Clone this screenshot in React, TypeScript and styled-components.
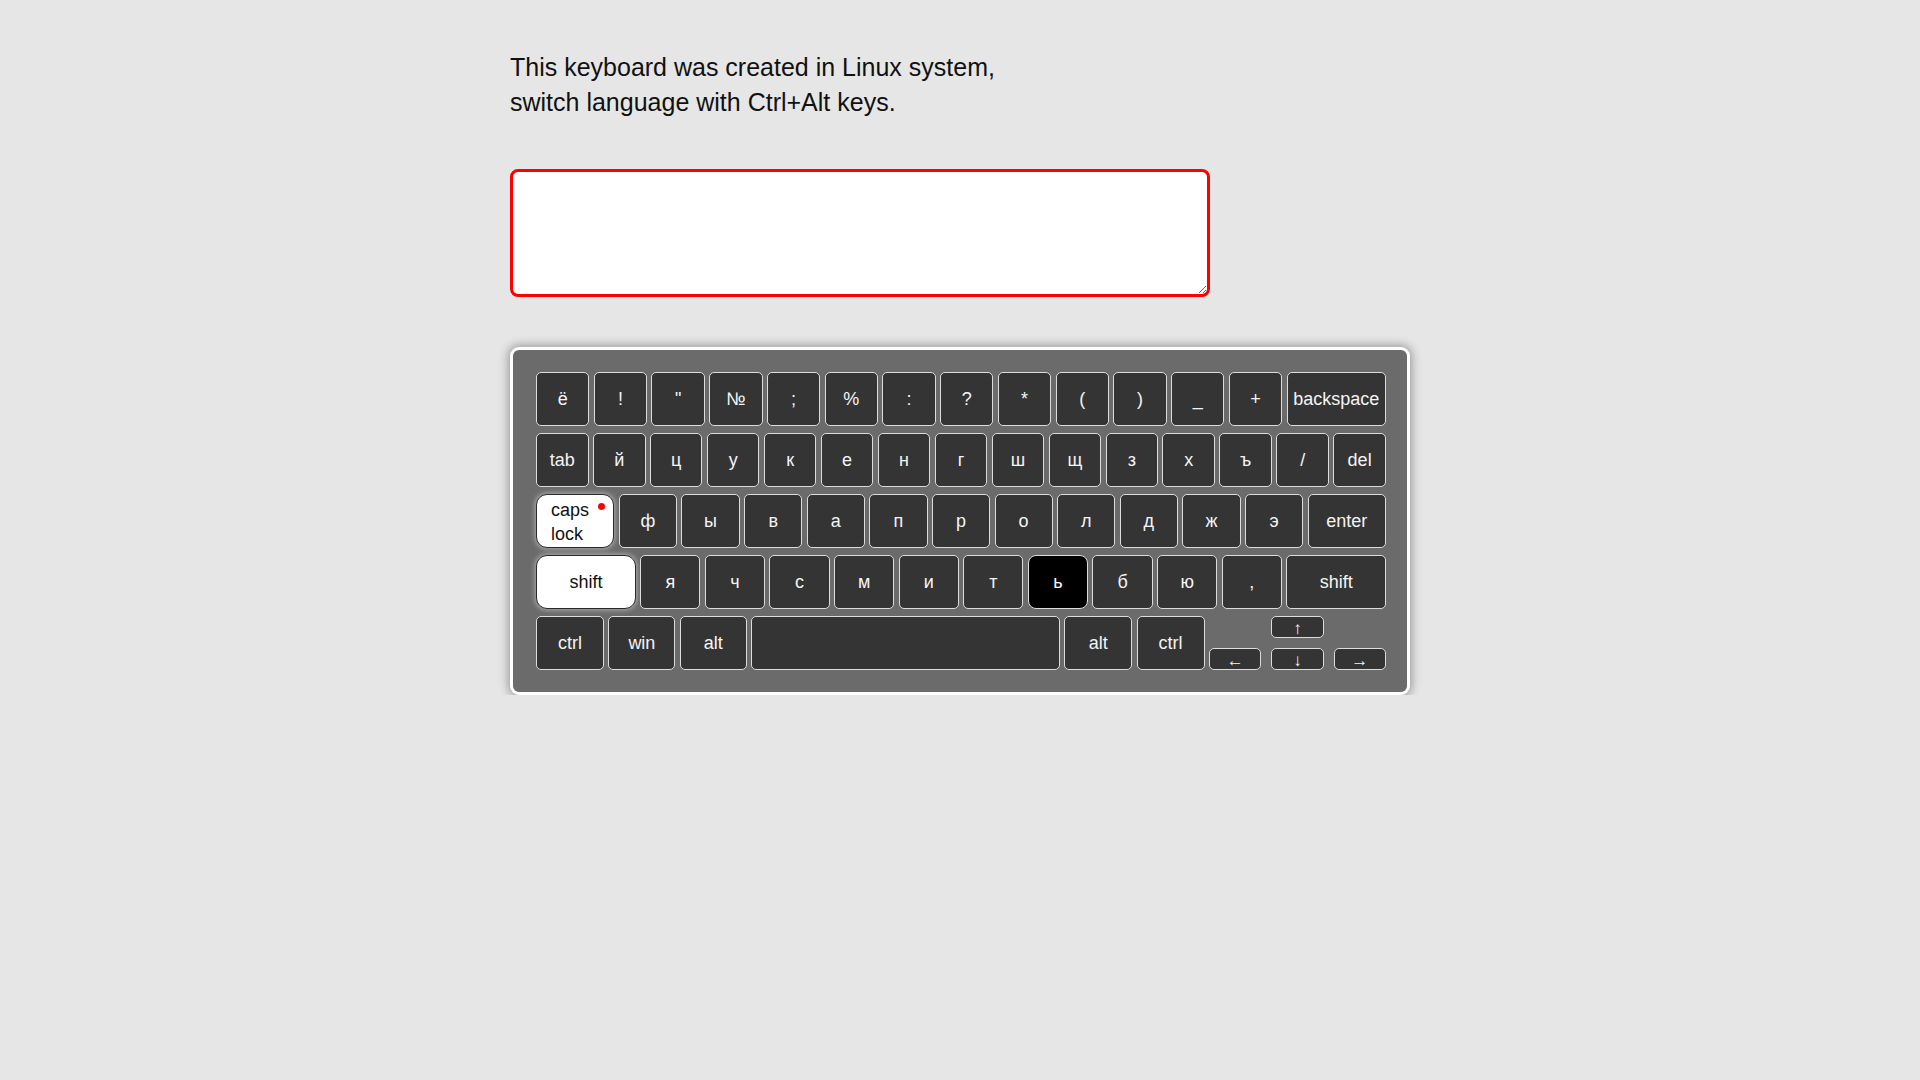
import React from "react";
import styled, { createGlobalStyle, css } from "styled-components";

const GlobalStyle = createGlobalStyle`
  html, body {
    margin: 0;
    padding: 0;
    background: #e6e6e6;
    font-family: "Liberation Sans", Arial, sans-serif;
  }
`;

const Page = styled.main`
  width: 900px;
  margin: 0 auto;
  padding-top: 50px;
`;

const Intro = styled.p`
  margin: 0;
  font-size: 25px;
  line-height: 35px;
  color: #111;
`;

const TextBox = styled.textarea`
  display: block;
  box-sizing: border-box;
  width: 700px;
  height: 128px;
  margin-top: 49px;
  border: 3px solid #ff0000;
  border-radius: 8px;
  background: #fff;
  outline: none;
  font-family: "Liberation Sans", Arial, sans-serif;
  font-size: 18px;
`;

const Keyboard = styled.section`
  box-sizing: border-box;
  width: 900px;
  margin-top: 50px;
  padding: 22px 21px 22px 23px;
  border: 3px solid #ffffff;
  border-radius: 9px;
  background: #6b6b6b;
  box-shadow: 0 0 10px 2px rgba(0, 0, 0, 0.32);
  display: flex;
  flex-direction: column;
  gap: 7px;
`;

const Row = styled.div`
  display: flex;
  gap: 4.4px;
  height: 54px;
`;

type Variant = "dark" | "light" | "pressed";

const Key = styled.div<{ $grow?: number; $width?: number; $variant?: Variant; $align?: "left" | "center" }>`
  position: relative;
  box-sizing: border-box;
  ${(p) =>
    p.$width
      ? css`flex: 0 0 ${p.$width}px;`
      : css`flex: ${p.$grow ?? 1} 1 0;`}
  min-width: 0;
  height: 100%;
  display: flex;
  align-items: center;
  justify-content: ${(p) => (p.$align === "left" ? "flex-start" : "center")};
  font-size: 18px;
  line-height: 23px;
  white-space: nowrap;
  ${(p) => {
    switch (p.$variant) {
      case "light":
        return css`
          background: #ffffff;
          color: #111;
          border: 1px solid #2a2a2a;
          border-radius: 11px;
          box-shadow: 0 0 5px 1px rgba(255, 255, 255, 0.45);
        `;
      case "pressed":
        return css`
          background: #000000;
          color: #fff;
          border: 1px solid #dddddd;
          border-radius: 8px;
        `;
      default:
        return css`
          background: #343434;
          color: #f4f4f4;
          border: 1px solid #dcdcdc;
          border-radius: 5px;
        `;
    }
  }}
`;

const TwoLines = styled.span`
  display: flex;
  flex-direction: column;
  margin-left: 14px;
  margin-top: 1px;
  line-height: 24px;
`;

const Indicator = styled.span`
  position: absolute;
  top: 8px;
  right: 8px;
  width: 7px;
  height: 7px;
  border-radius: 50%;
  background: #ff0000;
`;

const ArrowCluster = styled.div`
  flex: 0 0 177px;
  display: grid;
  grid-template-columns: repeat(3, 1fr);
  grid-template-rows: 22px 22px;
  column-gap: 10px;
  row-gap: 10px;
`;

const ArrowKey = styled.div<{ $col: number; $row: number }>`
  box-sizing: border-box;
  grid-column: ${(p) => p.$col};
  grid-row: ${(p) => p.$row};
  display: flex;
  align-items: center;
  justify-content: center;
  padding-top: 3px;
  background: #343434;
  color: #f4f4f4;
  border: 1px solid #dcdcdc;
  border-radius: 5px;
  font-size: 17px;
  line-height: 1;
`;

const row1 = ["ё", "!", "\"", "№", ";", "%", ":", "?", "*", "(", ")", "_", "+"];
const row2 = ["й", "ц", "у", "к", "е", "н", "г", "ш", "щ", "з", "х", "ъ", "/"];
const row3 = ["ф", "ы", "в", "а", "п", "р", "о", "л", "д", "ж", "э"];
const row4 = ["я", "ч", "с", "м", "и", "т", "ь", "б", "ю", ","];

export default function App() {
  return (
    <>
      <GlobalStyle />
      <Page>
        <Intro>
          This keyboard was created in Linux system,
          <br />
          switch language with Ctrl+Alt keys.
        </Intro>
        <TextBox />
        <Keyboard>
          <Row>
            {row1.map((k) => (
              <Key key={k}>{k}</Key>
            ))}
            <Key $grow={1.9}>backspace</Key>
          </Row>
          <Row>
            <Key>tab</Key>
            {row2.map((k) => (
              <Key key={k}>{k}</Key>
            ))}
            <Key>del</Key>
          </Row>
          <Row>
            <Key $grow={1.36} $variant="light" $align="left">
              <TwoLines>
                <span>caps</span>
                <span>lock</span>
              </TwoLines>
              <Indicator />
            </Key>
            {row3.map((k) => (
              <Key key={k}>{k}</Key>
            ))}
            <Key $grow={1.36}>enter</Key>
          </Row>
          <Row>
            <Key $grow={1.68} $variant="light">shift</Key>
            {row4.map((k) => (
              <Key key={k} $variant={k === "ь" ? "pressed" : "dark"}>
                {k}
              </Key>
            ))}
            <Key $grow={1.68}>shift</Key>
          </Row>
          <Row>
            <Key $width={68}>ctrl</Key>
            <Key $width={67}>win</Key>
            <Key $width={67}>alt</Key>
            <Key $grow={1} />
            <Key $width={68}>alt</Key>
            <Key $width={68}>ctrl</Key>
            <ArrowCluster>
              <ArrowKey $col={2} $row={1}>↑</ArrowKey>
              <ArrowKey $col={1} $row={2}>←</ArrowKey>
              <ArrowKey $col={2} $row={2}>↓</ArrowKey>
              <ArrowKey $col={3} $row={2}>→</ArrowKey>
            </ArrowCluster>
          </Row>
        </Keyboard>
      </Page>
    </>
  );
}
